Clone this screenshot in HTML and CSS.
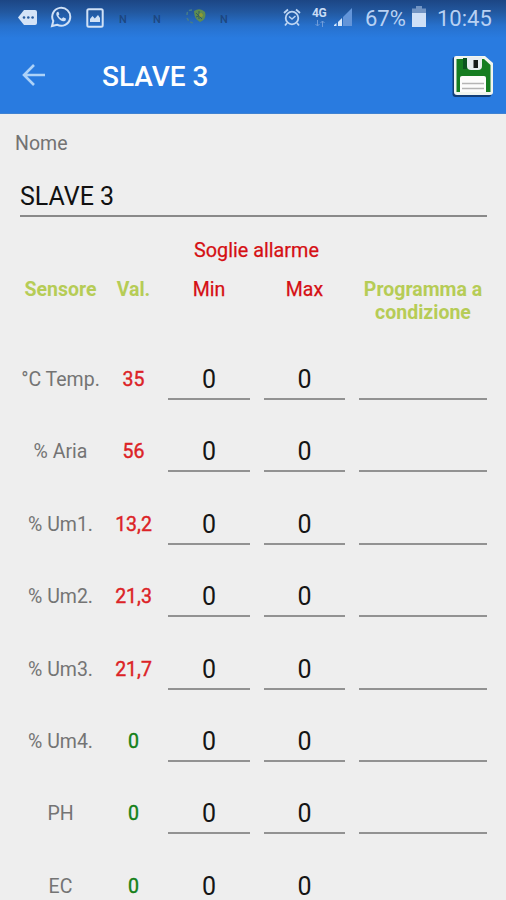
FILE: index.html
```html
<!DOCTYPE html>
<html lang="it">
<head>
<meta charset="utf-8">
<title>SLAVE 3</title>
<link rel="stylesheet" href="styles.css">
</head>
<body>
<header class="top">
  <div class="status">
    <div class="notices">
      <svg class="i-tag" width="21" height="17" viewBox="0 0 21 17"><path d="M7 1H18Q20 1 20 3V14Q20 16 18 16H7L1 8.5Z" fill="#d4e3f7"/><g fill="#285c9f"><circle cx="7" cy="8.5" r="1.3"/><circle cx="11.3" cy="8.5" r="1.3"/><circle cx="15.6" cy="8.5" r="1.3"/></g></svg>
      <svg class="i-wa" width="22" height="22" viewBox="0 0 22 22"><path d="M2 20l1.3-5A9 9 0 1 1 7 18.7Z" fill="none" stroke="#d0e1f6" stroke-width="2"/><path d="M7.8 5.8c-2 .5-2 3.300 0 5.800 2.400 3.200 6.300 5.200 8 2.300l.1-1.300-2.700-1.300-1.500 1.400c-1.600-.7-2.600-1.700-3.300-3.200l1-1.300-1-2.400Z" fill="#d0e1f6"/></svg>
      <svg class="i-img" width="18" height="20" viewBox="0 0 18 20"><rect x="1.300" y="1.300" width="15.400" height="17.400" rx="1.500" fill="none" stroke="#d0e1f6" stroke-width="2"/><path d="M4 14V11l2.500-3 2.300 2.500L12 7l2 3v4Z" fill="#d0e1f6"/></svg>
      <span class="n n1">N</span><span class="n n2">N</span>
      <svg class="i-leaf" width="22" height="18" viewBox="0 0 22 18"><path d="M9 3Q15-1 20 4Q22 11 15 14Q9 11 9 3Z" fill="#5d8b52"/><path d="M11 5l6 6M14 3v8M11 9l7-3" stroke="#315d65" stroke-width="1"/><path d="M7 2Q2 2 2 7M2 10Q4 15 10 15" fill="none" stroke="#467c8b" stroke-width="1.500" stroke-dasharray="3 2"/><circle cx="16" cy="7" r="2" fill="#8d9b35"/></svg>
      <span class="n n3">N</span>
    </div>
    <div class="system">
      <svg class="i-alarm" width="18" height="19" viewBox="0 0 18 19"><g fill="none" stroke="#bdd5f3"><circle cx="9" cy="10" r="6.300" stroke-width="1.800"/><path d="M1 5l4-3.500M17 5l-4-3.500M4 15l-2 2.500M14 15l2 2.500" stroke-width="1.800"/><path d="M6 8.500l3 2.500 3.500-3" stroke-width="1.500"/></g></svg>
      <div class="net"><b>4G</b><svg width="12" height="7" viewBox="0 0 12 7"><path d="M3.500 0V6M1.500 4l2 2 2-2M8.500 7V1M6.500 3l2-2 2 2" fill="none" stroke="#6f9cda"/></svg></div>
      <svg class="i-sig" width="20" height="19" viewBox="0 0 20 19"><path d="M19 0V18H10V9Z" fill="#6395d9"/><path d="M5 14L9 10V18H5Z" fill="#d7e8fb"/><path d="M1 17L3.500 15V18H1Z" fill="#d7e8fb"/></svg>
      <span class="pct">67%</span>
      <svg class="i-bat" width="14" height="21" viewBox="0 0 14 21"><path d="M4 0H10V2.500H14V8H0V2.500H4Z" fill="#7294c3"/><path d="M0 7H14V21H0Z" fill="#cfe0f7"/></svg>
      <span class="clock">10:45</span>
    </div>
  </div>
  <div class="bar">
    <svg class="back" width="24" height="22" viewBox="0 0 24 22"><path d="M12 1L2 11L12 21M2 11H23" fill="none" stroke="#add2f8" stroke-width="2.600"/></svg>
    <h1>SLAVE 3</h1>
    <svg class="save" width="42" height="43" viewBox="0 0 42 43"><path d="M3 1H32L40 8V38Q40 41 37 41H4Q1 41 1 38V3Q1 1 3 1Z" fill="#123e78" transform="translate(-.5 1)"/><path d="M4 1H33L41 8V37Q41 40 38 40H5Q2 40 2 37V3Q2 1 4 1Z" fill="#f1f5ef"/><path d="M4.500 4H32L38.500 10V37H4.500Z" fill="#167d21"/><path d="M11 3H15V14H11Z" fill="#0b5420"/><path d="M15 2H30V11Q30 15 26 15H19Q15 15 15 11Z" fill="#e8edf0"/><rect x="21.500" y="5" width="4.500" height="8" fill="#161b19"/><path d="M8 23Q8 21 10 21H32Q34 21 34 23V37H8Z" fill="#fcfcfc"/><path d="M10 28.500H32M10 33.500H32" stroke="#b5b5b5" stroke-width="1.300"/></svg>
  </div>
</header>
<main>
  <div class="label">Nome</div>
  <div class="name">SLAVE 3</div>
  <div class="group">Soglie allarme</div>
  <div class="grid head"><b class="lime">Sensore</b><b class="lime">Val.</b><span>Min</span><span>Max</span><b class="lime">Programma a<br>condizione</b></div>
  <div class="grid row"><span>°C Temp.</span><span class="v">35</span><i>0</i><i>0</i><i></i></div>
  <div class="grid row"><span>% Aria</span><span class="v">56</span><i>0</i><i>0</i><i></i></div>
  <div class="grid row"><span>% Um1.</span><span class="v">13,2</span><i>0</i><i>0</i><i></i></div>
  <div class="grid row"><span>% Um2.</span><span class="v">21,3</span><i>0</i><i>0</i><i></i></div>
  <div class="grid row"><span>% Um3.</span><span class="v">21,7</span><i>0</i><i>0</i><i></i></div>
  <div class="grid row"><span>% Um4.</span><span class="v ok">0</span><i>0</i><i>0</i><i></i></div>
  <div class="grid row"><span>PH</span><span class="v ok">0</span><i>0</i><i>0</i><i></i></div>
  <div class="grid row"><span>EC</span><span class="v ok">0</span><i>0</i><i>0</i><i></i></div>
</main>
</body>
</html>
```
FILE: styles.css
```css
* { box-sizing: border-box; }
html, body { height: 900px; overflow: hidden; }
body { margin: 0; background: #eeeeee; font-family: Roboto, sans-serif; }
svg { display: block; flex: none; }
.top { height: 114px; background: linear-gradient(#1c4684 0, #22589f 12px, #2771cd 26px, #297be0 38px); border-bottom: 1px solid #3f82d2; }
.status { display: flex; justify-content: space-between; height: 38px; }
.notices, .system { display: flex; align-items: flex-start; }
.i-tag { margin: 9px 0 0 17px; }
.i-wa { margin: 6px 0 0 12px; }
.i-img { margin: 8px 0 0 14px; }
.n { font-size: 11px; line-height: 12px; margin-top: 14px; width: 8px; color: #1d467f; font-weight: 500; }
.n1 { margin-left: 15px; }
.n2 { margin-left: 26px; }
.n3 { margin-left: 13px; }
.i-leaf { margin: 8px 0 0 24px; }
.i-alarm { margin-top: 8px; }
.net { width: 16px; margin: 7px 0 0 11px; color: #c9dcf5; font-size: 12px; line-height: 12px; }
.net b { display: block; letter-spacing: -0.3px; }
.net svg { margin: 1px 0 0 2px; }
.i-sig { margin: 8px 0 0 5px; }
.pct, .clock { font-size: 22px; line-height: 24px; margin-top: 7px; color: #b8d1f3; white-space: nowrap; }
.pct { width: 42px; margin-left: 12px; }
.i-bat { margin: 6px 0 0 5px; }
.clock { width: 55px; margin: 7px 14px 0 11px; }
.bar { display: flex; align-items: center; height: 76px; padding: 0 12px 0 22px; }
.back { margin-top: -2px; }
h1 { margin: 1px auto 0 56px; font-size: 28px; line-height: 32px; font-weight: 500; color: #fff; }
.save { margin-top: 0; }
.label { margin: 18px 0 0 15px; font-size: 19.5px; line-height: 24px; color: #737373; }
.name { margin: 18px 19px 0 20px; height: 43px; padding-top: 7px; font-size: 25px; line-height: 32px; color: #111; border-bottom: 2px solid #898989; }
.group { width: 191px; margin: 22px 0 0 161px; text-align: center; font-size: 19.8px; line-height: 24px; color: #d50f13; -webkit-text-stroke: 0.25px; }
.grid { display: grid; grid-template-columns: 91px 55px 96px 95px 142px; margin-left: 15px; text-align: center; font-size: 19.5px; }
.head { height: 66px; margin-top: 15px; line-height: 23px; color: #d50f13; -webkit-text-stroke: 0.25px; }
.lime { color: #b6cc56; font-weight: 700; -webkit-text-stroke: 0; }
.row { height: 72.4px; padding-top: 16px; line-height: 40px; color: #747474; }
.row i { height: 40px; margin: 0 7px; line-height: 39px; font-style: normal; font-size: 25px; color: #151515; border-bottom: 2px solid #929292; }
.v { color: #dc2226; -webkit-text-stroke: 0.4px; }
.ok { color: #158019; }
```
